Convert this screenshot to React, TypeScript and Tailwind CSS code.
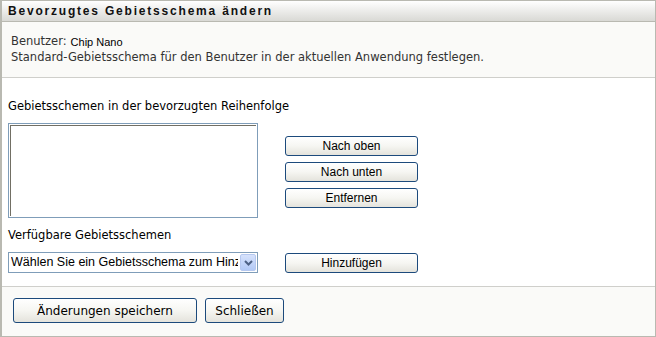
import React from "react"

const xpBtn =
  "flex items-center justify-center rounded-[3px] border border-[#1c4a7c] bg-gradient-to-b from-[#ffffff] via-[#f6f6f2] to-[#e4e3dc] text-black"

const SideButton = ({ label }: { label: string }) => (
  <button type="button" className={`${xpBtn} w-[133px] h-[20px] text-[12px] font-['Liberation_Sans',Arial,sans-serif]`}>
    {label}
  </button>
)

const App = () => {
  return (
    <div className="w-[656px] h-[337px] bg-white font-['DejaVu_Sans',Verdana,sans-serif] text-[11.5px] text-[#222]">
      <div className="w-full h-full flex flex-col border border-l-2 border-[#b9b9b1]">
        {/* header */}
        <div className="h-[21px] shrink-0 flex items-center pl-[6px] bg-gradient-to-b from-[#ffffff] to-[#d9d9d5] border-b border-[#b9b9b1]">
          <span className="font-bold text-[12px] tracking-[1.8px] text-[#111] font-['Liberation_Sans',Arial,sans-serif]">Bevorzugtes Gebietsschema ändern</span>
        </div>

        {/* info */}
        <div className="h-[56px] shrink-0 bg-[#fafaf8] border-b border-[#cfcfcb] px-[9px] pt-[13px] flex flex-col gap-[2px] text-[#333]">
          <div className="h-[14px] flex items-center">
            Benutzer:<span className="ml-[4px] text-black font-['Liberation_Sans',Arial,sans-serif] text-[11px]">Chip Nano</span>
          </div>
          <div className="h-[14px] flex items-center">Standard-Gebietsschema für den Benutzer in der aktuellen Anwendung festlegen.</div>
        </div>

        {/* body */}
        <div className="flex-1 bg-white border-b border-[#cfcfcb] px-[6px] pt-[22px]">
          <div className="h-[14px] flex items-center text-black">Gebietsschemen in der bevorzugten Reihenfolge</div>
          <div className="mt-[9px] flex">
            <div className="w-[250px] h-[95px] border border-[#7f9db9] p-[1px] bg-white">
              <div className="w-full h-full border-t border-l border-[#716f64] bg-white" />
            </div>
            <div className="ml-[27px] pt-[13px] flex flex-col gap-[6px]">
              <SideButton label="Nach oben" />
              <SideButton label="Nach unten" />
              <SideButton label="Entfernen" />
            </div>
          </div>

          <div className="mt-[11px] h-[14px] flex items-center text-black">Verfügbare Gebietsschemen</div>
          <div className="mt-[9px] flex items-start">
            <div className="w-[250px] h-[21px] border border-[#7f9db9] bg-white flex items-center pl-[2px] pr-[1px]">
              <span className="flex-1 min-w-0 overflow-hidden whitespace-nowrap text-[12.5px] text-black font-['Liberation_Sans',Arial,sans-serif]">
                Wählen Sie ein Gebietsschema zum Hinzufügen
              </span>
              <div className="w-[16px] h-[17px] ml-[2px] shrink-0 rounded-[2px] border border-[#b5c8f0] bg-gradient-to-b from-[#d6e2fc] to-[#b2c9f6] flex items-center justify-center">
                <svg width="9" height="6" viewBox="0 0 9 6">
                  <path d="M1 1 L4.5 4.5 L8 1" fill="none" stroke="#4d6185" strokeWidth="2" />
                </svg>
              </div>
            </div>
            <div className="ml-[27px] mt-[1px]">
              <SideButton label="Hinzufügen" />
            </div>
          </div>
        </div>

        {/* footer */}
        <div className="h-[49px] shrink-0 bg-[#fafaf8] flex items-start pt-[11px] pl-[11px] gap-[8px]">
          <button type="button" className={`${xpBtn} w-[184px] h-[25px] text-[12px]`}>Änderungen speichern</button>
          <button type="button" className={`${xpBtn} w-[79px] h-[25px] text-[12px]`}>Schließen</button>
        </div>
      </div>
    </div>
  )
}

export default App
